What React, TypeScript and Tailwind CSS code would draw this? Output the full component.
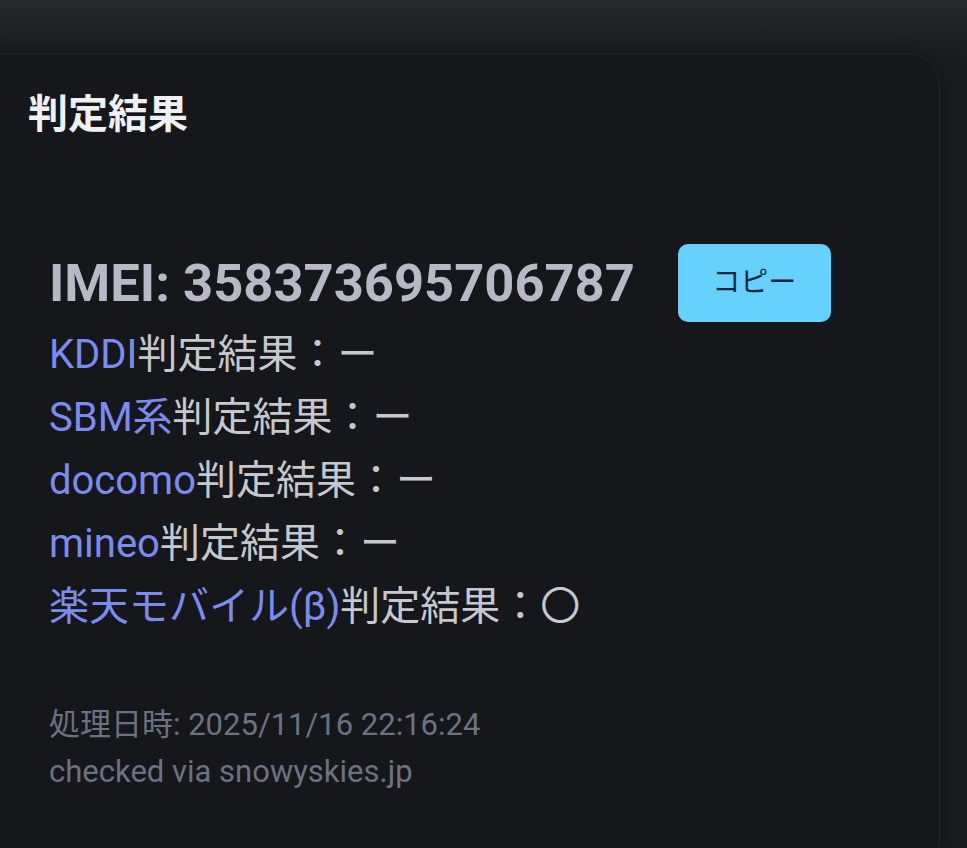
import { useState } from "react";

const carriers = [
  { name: "KDDI", result: "ー" },
  { name: "SBM系", result: "ー" },
  { name: "docomo", result: "ー" },
  { name: "mineo", result: "ー" },
  { name: "楽天モバイル(β)", result: "〇" },
];

export default function App() {
  const imei = "358373695706787";
  const [copied, setCopied] = useState(false);

  function handleCopy() {
    navigator.clipboard?.writeText(imei).catch(() => {});
    setCopied(true);
    setTimeout(() => setCopied(false), 1500);
  }

  return (
    <div className="min-h-screen overflow-hidden bg-[linear-gradient(to_bottom,#28292d_0px,#1b1c20_60px)] font-['Roboto','Noto_Sans_CJK_JP',sans-serif]">
      <div className="pt-[53px] pr-[27px]">
        <div className="ml-[-30px] min-h-[820px] rounded-[34px] border border-[#23242a] bg-[#16171b] pl-[57px] pt-[31px] shadow-[0_0_24px_rgba(0,0,0,0.35)]">
          <h2 className="text-[40px] leading-[60px] font-bold text-[#eef0f3]">判定結果</h2>

          <div className="ml-[21px] mt-[99px]">
            <div className="flex items-center">
              <div className="text-[52.5px] leading-[65px] font-bold text-[#b6b9c6]">IMEI: {imei}</div>
              <button
                type="button"
                onClick={handleCopy}
                className="ml-[43px] h-[78px] w-[153px] rounded-[10px] bg-[#66d1ff] text-[28px] text-[#0b2638] cursor-pointer"
              >
                {copied ? "✓" : "コピー"}
              </button>
            </div>

            <div className="mt-[1px] text-[40px] leading-[63px] text-[#c6c8ce]">
              {carriers.map((c) => (
                <div key={c.name}>
                  <span className="text-[#7b8cf0]">{c.name}</span>判定結果：{c.result}
                </div>
              ))}
            </div>

            <div className="mt-[63px] text-[31px] leading-[47px] text-[#6b7282]">
              <div>処理日時: 2025/11/16 22:16:24</div>
              <div>checked via snowyskies.jp</div>
            </div>
          </div>
        </div>
      </div>
    </div>
  );
}
